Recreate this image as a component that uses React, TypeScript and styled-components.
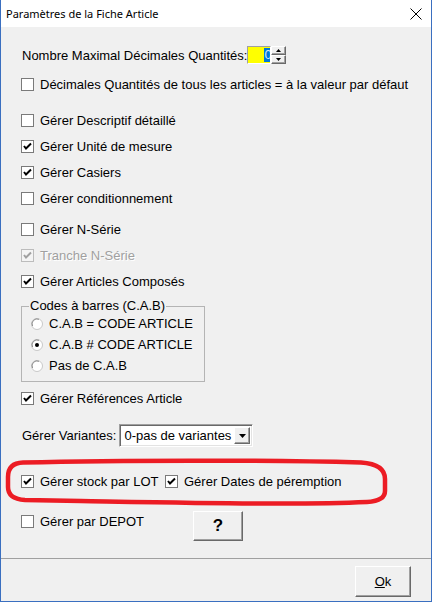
import React from "react";
import styled, { createGlobalStyle } from "styled-components";

const GlobalStyle = createGlobalStyle`
  html, body {
    margin: 0;
    padding: 0;
    background: #f0f0f0;
  }
  * {
    box-sizing: border-box;
  }
`;

const Window = styled.div`
  position: relative;
  width: 432px;
  height: 602px;
  display: flex;
  flex-direction: column;
  border: 1px solid #3a6fc0;
  border-top: none;
  background: #f0f0f0;
  font-family: "Liberation Sans", Arial, sans-serif;
  font-size: 13px;
  color: #000;
`;

const TitleBar = styled.div`
  height: 27px;
  flex: none;
  background: #fff;
  display: flex;
  align-items: center;
  justify-content: space-between;
  padding: 0 9px 0 5px;
`;

const Title = styled.span`
  font-family: "Noto Sans", "Liberation Sans", sans-serif;
  font-size: 11px;
`;

const Body = styled.div`
  flex: 1;
  display: flex;
  flex-direction: column;
  padding-left: 20px;
  border-bottom: 1px solid #a0a0a0;
`;

const Footer = styled.div`
  height: 42px;
  flex: none;
  display: flex;
  justify-content: flex-end;
  align-items: flex-start;
  padding: 7px 20px 0 0;
`;

const Row = styled.div<{ $mt: number; $h?: number; $top?: boolean }>`
  display: flex;
  align-items: ${(p) => (p.$top ? "flex-start" : "center")};
  margin-top: ${(p) => p.$mt}px;
  height: ${(p) => p.$h ?? 20}px;
  white-space: nowrap;
`;

const Label = styled.span`
  padding-left: 1px;
`;

const SpinField = styled.div`
  width: 24px;
  height: 18px;
  background: #ffff00;
  border: 1px solid;
  border-color: #a0a0a0 #fff #fff #a0a0a0;
  display: flex;
  justify-content: flex-end;
  align-items: center;
  overflow: hidden;
`;

const Selected = styled.span`
  width: 6px;
  height: 14px;
  line-height: 14px;
  background: #0078d7;
  color: #cfe8ff;
  overflow: hidden;
`;

const SpinButtons = styled.div`
  display: flex;
  flex-direction: column;
  width: 15px;
  height: 18px;
`;

const RaisedButton = styled.div`
  display: flex;
  align-items: center;
  justify-content: center;
  background: #f0f0f0;
  border: 1px solid;
  border-color: #fff #696969 #696969 #fff;
  box-shadow: inset -1px -1px 0 #a0a0a0;
`;

const SpinButton = styled(RaisedButton)`
  height: 9px;
`;

const CheckItem = styled.label<{ $w?: number; $disabled?: boolean }>`
  display: inline-flex;
  align-items: center;
  height: 20px;
  width: ${(p) => (p.$w ? `${p.$w}px` : "auto")};
  color: ${(p) => (p.$disabled ? "#a0a0a0" : "#000")};
  text-shadow: ${(p) => (p.$disabled ? "1px 1px 0 #fff" : "none")};
  white-space: nowrap;
  flex: none;
`;

const Box = styled.span<{ $disabled?: boolean }>`
  width: 13px;
  height: 13px;
  flex: none;
  margin-right: 6px;
  border: 1px solid ${(p) => (p.$disabled ? "#bcbcbc" : "#7a7a7a")};
  background: ${(p) => (p.$disabled ? "#f4f4f4" : "#fff")};
  display: flex;
  align-items: center;
  justify-content: center;
`;

const Group = styled.fieldset`
  margin: 8px 0 0 0;
  padding: 0 0 5px 0;
  width: 184px;
  border: 1px solid #b4b4b4;
  min-inline-size: auto;
`;

const Legend = styled.legend`
  padding: 0 1px;
  margin-left: 7px;
  line-height: 14px;
`;

const RadioList = styled.div`
  display: flex;
  flex-direction: column;
  padding-left: 9px;
`;

const RadioItem = styled.label`
  display: flex;
  align-items: center;
  height: 21px;
  gap: 6px;
  white-space: nowrap;
`;

const Select = styled.div`
  margin-left: 3px;
  width: 134px;
  height: 23px;
  display: flex;
  align-items: center;
  justify-content: space-between;
  background: #fff;
  border: 1px solid;
  border-color: #a0a0a0 #fff #fff #a0a0a0;
  box-shadow: inset 1px 1px 0 #696969, inset -1px -1px 0 #e3e3e3;
  padding: 2px 2px 2px 4px;
`;

const DropButton = styled(RaisedButton)`
  width: 16px;
  height: 17px;
`;

const PushButton = styled(RaisedButton)<{ $w: number; $h: number }>`
  width: ${(p) => p.$w}px;
  height: ${(p) => p.$h}px;
`;

const Question = styled.span`
  font-size: 17px;
  font-weight: bold;
`;

const Underlined = styled.span`
  text-decoration: underline;
`;

const Annotation = styled.svg`
  position: absolute;
  left: 0;
  top: 455px;
  pointer-events: none;
`;

const Tri = ({ up, w = 5 }: { up?: boolean; w?: number }) => {
  const h = Math.ceil(w / 2);
  return (
    <svg width={w} height={h} viewBox={`0 0 ${w} ${h}`}>
      <polygon
        points={up ? `${w / 2},0 ${w},${h} 0,${h}` : `0,0 ${w},0 ${w / 2},${h}`}
        fill="#000"
      />
    </svg>
  );
};

const Check = ({
  label,
  checked,
  disabled,
  w,
}: {
  label: string;
  checked?: boolean;
  disabled?: boolean;
  w?: number;
}) => (
  <CheckItem $w={w} $disabled={disabled}>
    <Box $disabled={disabled}>
      {checked && (
        <svg width="9" height="9" viewBox="0 0 9 9">
          <polyline
            points="1,4 3,6.5 8,1.5"
            fill="none"
            stroke={disabled ? "#a0a0a0" : "#000"}
            strokeWidth="2"
          />
        </svg>
      )}
    </Box>
    {label}
  </CheckItem>
);

const Radio = ({ label, checked }: { label: string; checked?: boolean }) => (
  <RadioItem>
    <svg width="12" height="12" viewBox="0 0 12 12">
      <circle cx="6" cy="6" r="5.5" fill="#fff" stroke="#c8c8c8" />
      <path d="M1.5 8 A5 5 0 0 1 8 1.3" fill="none" stroke="#8a8a8a" />
      {checked && <circle cx="6" cy="6" r="2" fill="#000" />}
    </svg>
    {label}
  </RadioItem>
);

export default function App() {
  return (
    <>
      <GlobalStyle />
      <Window>
        <TitleBar>
          <Title>Paramètres de la Fiche Article</Title>
          <svg width="12" height="12" viewBox="0 0 12 12">
            <path d="M0.5 0.5 L11.5 11.5 M11.5 0.5 L0.5 11.5" stroke="#000" strokeWidth="1" />
          </svg>
        </TitleBar>
        <Body>
          <Row $mt={19} $h={18}>
            <Label>Nombre Maximal Décimales Quantités:</Label>
            <SpinField>
              <Selected>0</Selected>
            </SpinField>
            <SpinButtons>
              <SpinButton>
                <Tri up />
              </SpinButton>
              <SpinButton>
                <Tri />
              </SpinButton>
            </SpinButtons>
          </Row>
          <Row $mt={10}>
            <Check label="Décimales Quantités de tous les articles = à la valeur par défaut" />
          </Row>
          <Row $mt={16}>
            <Check label="Gérer Descriptif détaillé" />
          </Row>
          <Row $mt={6}>
            <Check label="Gérer Unité de mesure" checked />
          </Row>
          <Row $mt={6}>
            <Check label="Gérer Casiers" checked />
          </Row>
          <Row $mt={6}>
            <Check label="Gérer conditionnement" />
          </Row>
          <Row $mt={11}>
            <Check label="Gérer N-Série" />
          </Row>
          <Row $mt={6}>
            <Check label="Tranche N-Série" checked disabled />
          </Row>
          <Row $mt={6}>
            <Check label="Gérer Articles Composés" checked />
          </Row>
          <Group>
            <Legend>Codes à barres (C.A.B)</Legend>
            <RadioList>
              <Radio label="C.A.B = CODE ARTICLE" />
              <Radio label="C.A.B # CODE ARTICLE" checked />
              <Radio label="Pas de C.A.B" />
            </RadioList>
          </Group>
          <Row $mt={6}>
            <Check label="Gérer Références Article" checked />
          </Row>
          <Row $mt={16} $h={23}>
            <Label>Gérer Variantes:</Label>
            <Select>
              0-pas de variantes
              <DropButton>
                <Tri w={7} />
              </DropButton>
            </Select>
          </Row>
          <Row $mt={24}>
            <Check label="Gérer stock par LOT" checked w={144} />
            <Check label="Gérer Dates de péremption" checked />
          </Row>
          <Row $mt={20} $h={30} $top>
            <Check label="Gérer par DEPOT" w={172} />
            <PushButton $w={50} $h={30}>
              <Question>?</Question>
            </PushButton>
          </Row>
        </Body>
        <Footer>
          <PushButton $w={56} $h={31}>
            <span>
              <Underlined>O</Underlined>k
            </span>
          </PushButton>
        </Footer>
        <Annotation width="392" height="56" viewBox="0 0 392 56">
          <path
            d="M22 7.5 C120 5, 260 5, 360 7.5 Q384 9 384 24 L384 36 Q384 46 366 47 C300 50, 200 48, 80 46 L24 45 Q7 44 7 32 L7 22 Q7 8 22 7.5 Z"
            fill="none"
            stroke="#ec1c24"
            strokeWidth="4.5"
          />
        </Annotation>
      </Window>
    </>
  );
}
